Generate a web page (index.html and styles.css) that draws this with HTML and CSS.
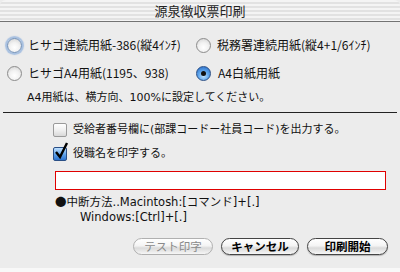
FILE: index.html
```html
<!DOCTYPE html>
<html lang="ja">
<head>
<meta charset="utf-8">
<link rel="stylesheet" href="styles.css">
</head>
<body>
<div class="window">
  <div class="titlebar">源泉徴収票印刷</div>
  <div class="content">
    <div class="radios">
      <label class="opt"><span class="radio focus"></span><span>ヒサゴ連続用紙-386(縦4ｲﾝﾁ)</span></label>
      <label class="opt"><span class="radio"></span><span>税務署連続用紙(縦4+1/6ｲﾝﾁ)</span></label>
      <label class="opt"><span class="radio"></span><span>ヒサゴA4用紙(1195、938)</span></label>
      <label class="opt"><span class="radio on"></span><span>A4白紙用紙</span></label>
    </div>
    <p class="note">A4用紙は、横方向、100%に設定してください。</p>
    <div class="sep"></div>
    <div class="checks">
      <label class="opt"><span class="check"></span><span>受給者番号欄に(部課コードー社員コード)を出力する。</span></label>
      <label class="opt"><span class="check on"><svg viewBox="0 0 16 18" width="16" height="18"><path d="M3 10 L7 15 L14 1" fill="none" stroke="#000" stroke-width="2.4" stroke-linejoin="miter"/></svg></span><span>役職名を印字する。</span></label>
    </div>
    <div class="field"></div>
    <div class="howto">
      <div><span class="dot">●</span>中断方法..Macintosh:[コマンド]+[.]</div>
      <div class="win">Windows:[Ctrl]+[.]</div>
    </div>
    <div class="buttons">
      <span class="btn disabled">テスト印字</span>
      <span class="btn cancel">キャンセル</span>
      <span class="btn print">印刷開始</span>
    </div>
  </div>
  <div class="bottom"></div>
</div>
</body>
</html>
```
FILE: styles.css
```css
html, body {
  margin: 0;
  padding: 0;
}
body {
  width: 400px;
  height: 272px;
  overflow: hidden;
  background: #ececec;
  font-family: "DejaVu Sans", "Noto Sans CJK JP", sans-serif;
  font-size: 11px;
  color: #111;
}
.window {
  width: 400px;
  height: 272px;
  display: flex;
  flex-direction: column;
  background: #ececec;
}
.titlebar {
  height: 21px;
  line-height: 21px;
  border-bottom: 1px solid #737373;
  text-align: center;
  font-family: "Noto Sans CJK JP", sans-serif;
  font-size: 13px;
  color: #222;
  background: repeating-linear-gradient(to bottom, #f4f4f4 0px, #f4f4f4 2px, #e2e2e2 2px, #e2e2e2 4px);
  border-radius: 6px 6px 0 0;
}
.content {
  flex: 1;
  padding: 15px 0 0 7px;
  display: flex;
  flex-direction: column;
}
.radios {
  display: grid;
  grid-template-columns: 189px 1fr;
  row-gap: 12px;
  font-family: "Noto Sans CJK JP", sans-serif;
  font-size: 12px;
}
.opt {
  display: flex;
  align-items: center;
  height: 16px;
  line-height: 16px;
  white-space: nowrap;
}
.radio {
  width: 13px;
  height: 13px;
  border-radius: 50%;
  border: 1px solid #8c8c8c;
  background: radial-gradient(circle at 50% 65%, #ffffff 0%, #f2f2f2 45%, #cfcfcf 100%);
  margin-right: 6px;
  flex: none;
  position: relative;
}
.radio.focus {
  border-color: #6f8fb8;
  box-shadow: 0 0 1px 2px rgba(110, 155, 215, 0.55);
}
.radio.on {
  border-color: #2a4f86;
  background: radial-gradient(circle at 50% 70%, #bfe2ff 0%, #5fa6ec 45%, #1f62c0 100%);
}
.radio.on::after {
  content: "";
  position: absolute;
  left: 4px;
  top: 4px;
  width: 5px;
  height: 5px;
  border-radius: 50%;
  background: #111;
}
.radios .opt:nth-child(4) .radio {
  margin-right: 7px;
}
.note {
  margin: 9px 0 0 20px;
  line-height: 16px;
  height: 16px;
}
.sep {
  margin: 6px 3px 0 -4px;
  height: 1px;
  background: #222;
}
.checks {
  margin: 9px 0 0 46px;
  display: flex;
  flex-direction: column;
  gap: 8px;
}
.check {
  width: 12px;
  height: 12px;
  border: 1px solid #9a9a9a;
  border-radius: 2px;
  background: linear-gradient(to bottom, #ffffff 0%, #f0f0f0 50%, #d8d8d8 100%);
  margin-right: 6px;
  flex: none;
  position: relative;
}
.check.on {
  border-color: #2a4f86;
  background: linear-gradient(to bottom, #bfe0ff 0%, #5ea2ea 55%, #2d74d0 100%);
}
.check svg {
  position: absolute;
  left: -1px;
  top: -6px;
}
.field {
  margin: 9px 0 0 48px;
  width: 329px;
  height: 17px;
  border: 1px solid #e00000;
  background: #fff;
}
.howto {
  margin: 4px 0 0 48px;
  line-height: 15px;
  font-size: 11.5px;
}
.howto .dot {
  font-family: "Noto Sans CJK JP", sans-serif;
}
.howto .win {
  padding-left: 25px;
}
.buttons {
  margin: 13px 12px 0 0;
  display: flex;
  justify-content: flex-end;
  gap: 8px;
}
.btn {
  height: 15px;
  line-height: 15px;
  border: 1px solid #444;
  border-radius: 9px;
  background: linear-gradient(to bottom, #ffffff 0%, #f4f4f4 45%, #dadada 60%, #f6f6f6 100%);
  text-align: center;
  font-family: "Noto Sans CJK JP", sans-serif;
  font-size: 11.5px;
  font-weight: 700;
  color: #000;
  box-shadow: 0 1px 1px rgba(0,0,0,0.25);
}
.btn.disabled {
  width: 78px;
  border-color: #b0b0b0;
  color: #8a8a8a;
  font-weight: 400;
  box-shadow: none;
}
.btn.cancel {
  width: 76px;
}
.btn.print {
  width: 79px;
}
.bottom {
  height: 4px;
  background: #f8f8f8;
}
```
